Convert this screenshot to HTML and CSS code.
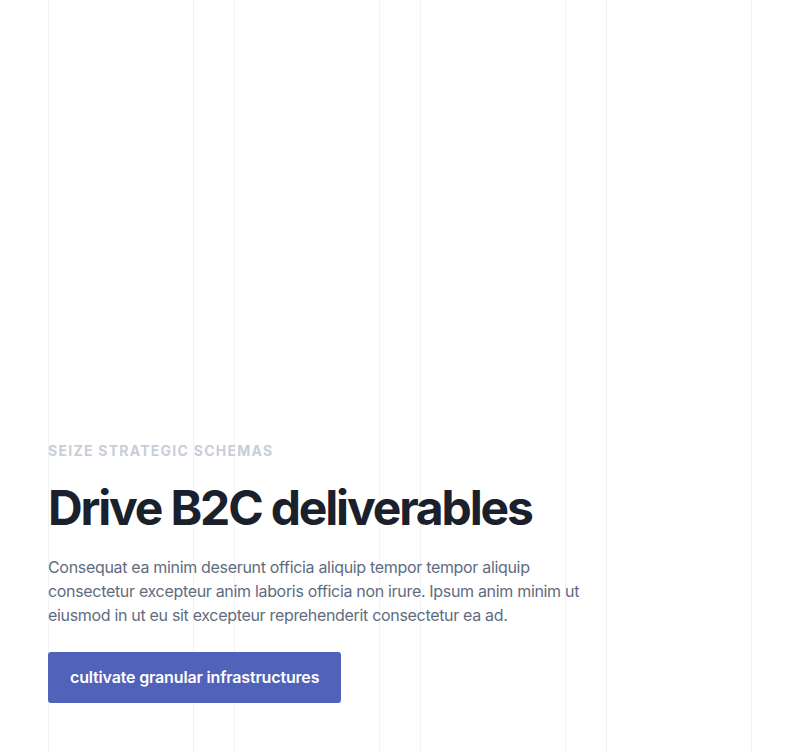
FILE: index.html
```html
<!DOCTYPE html>
<html lang="en">
<head>
<meta charset="utf-8">
<title>Drive B2C deliverables</title>
<link rel="stylesheet" href="styles.css">
</head>
<body>
<section class="hero">
  <div class="grid-lines" aria-hidden="true">
    <div class="col"></div>
    <div class="col"></div>
    <div class="col"></div>
    <div class="col"></div>
  </div>
  <div class="content">
    <p class="eyebrow">Seize strategic schemas</p>
    <h1 class="title">Drive B2C deliverables</h1>
    <p class="lead">Consequat ea minim deserunt officia aliquip tempor tempor aliquip consectetur excepteur anim laboris officia non irure. Ipsum anim minim ut eiusmod in ut eu sit excepteur reprehenderit consectetur ea ad.</p>
    <a class="btn" href="#">cultivate granular infrastructures</a>
  </div>
</section>
</body>
</html>
```

FILE: styles.css
```css
* { box-sizing: border-box; }
html, body { margin: 0; padding: 0; }
body {
  font-family: Inter, "Noto Sans", sans-serif;
  background: #fff;
  color: #1a202c;
}
.hero {
  position: relative;
  height: 752px;
  padding: 0 48px 49px;
  display: flex;
  flex-direction: column;
  justify-content: flex-end;
}
.grid-lines {
  position: absolute;
  top: 0; bottom: 0; left: 48px; right: 48px;
  display: grid;
  grid-template-columns: repeat(4, 1fr);
  column-gap: 40px;
}
.col {
  border-left: 1px solid #f1f3f6;
  border-right: 1px solid #f1f3f6;
}
.content {
  position: relative;
  display: flex;
  flex-direction: column;
  align-items: flex-start;
}
.eyebrow {
  margin: 0;
  font-size: 14px;
  line-height: 20px;
  font-weight: 700;
  letter-spacing: 0.09em;
  text-transform: uppercase;
  color: #c8ced8;
}
.title {
  margin: 21px 0 0;
  font-size: 48px;
  line-height: 52px;
  font-weight: 700;
  letter-spacing: -0.045em;
  color: #1a202c;
}
.lead {
  margin: 21px 0 0;
  max-width: 544px;
  font-size: 16px;
  line-height: 24px;
  letter-spacing: -0.02em;
  color: #5f6c80;
}
.btn {
  margin-top: 25px;
  display: inline-block;
  padding: 14px 22px;
  background: #5062b9;
  color: #fff;
  font-size: 16px;
  line-height: 23px;
  font-weight: 600;
  letter-spacing: -0.01em;
  text-decoration: none;
  border-radius: 3px;
}
```
